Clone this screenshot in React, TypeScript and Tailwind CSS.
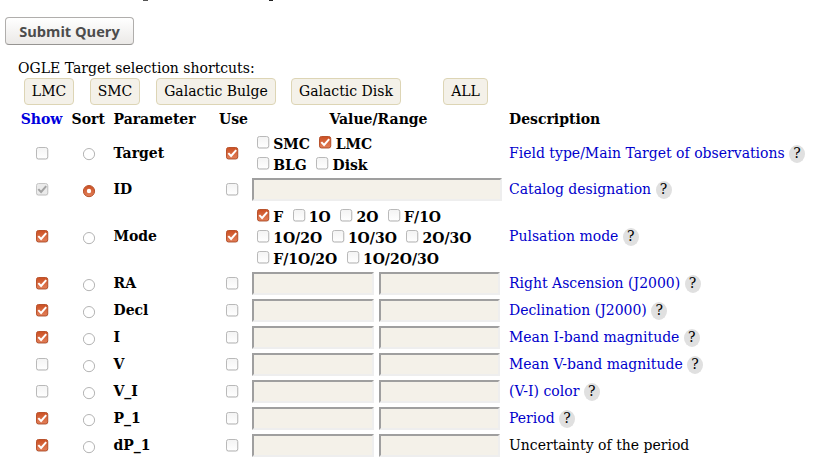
import { Fragment, ReactNode } from "react";

function Check({ on = false, disabled = false }: { on?: boolean; disabled?: boolean }) {
  const stroke = disabled ? "#c6c6c6" : on ? "#b9532d" : "#b9b9b9";
  const fill = disabled ? "#ebebeb" : on ? "url(#orange)" : "url(#plain)";
  return (
    <svg width="13" height="13" viewBox="0 0 13 13" className="shrink-0">
      <rect x="0" y="1" width="12.4" height="11.7" rx="2.5" fill="#000" opacity="0.1" />
      <rect x="0.5" y="0.5" width="11.2" height="11.4" rx="2" fill={fill} stroke={stroke} />
      {on && (
        <path
          d="M2.3 6.1 L5.1 9 L10.2 3.2"
          fill="none"
          stroke={disabled ? "#a3a3a3" : "#fff"}
          strokeWidth="2"
        />
      )}
    </svg>
  );
}

function Radio({ on = false }: { on?: boolean }) {
  return (
    <svg width="13" height="13" viewBox="0 0 13 13" className="shrink-0">
      <circle cx="6" cy="6.1" r="5.6" fill={on ? "url(#orange)" : "#fff"} stroke={on ? "#b9532d" : "#b4b4b4"} />
      {on && <circle cx="6" cy="6" r="2.2" fill="#fff" />}
    </svg>
  );
}

function Option({ label, on }: { label: string; on?: boolean }) {
  return (
    <span className="flex h-[21px] items-start">
      <Check on={on} />
      <b className="ml-[3.2px] leading-[17px]">{label}</b>
    </span>
  );
}

function Options({ lines, on }: { lines: string[][]; on: string }) {
  return (
    <div className="pl-[5px]">
      {lines.map((line) => (
        <div key={line[0]} className="flex gap-[9.5px]">
          {line.map((label) => (
            <Option key={label} label={label} on={label === on} />
          ))}
        </div>
      ))}
    </div>
  );
}

const box =
  "h-[23px] border-2 border-t-[#9f9f9f] border-l-[#9f9f9f] border-b-[#eeeeee] border-r-[#eeeeee] bg-[#f4f1e9] outline-none";

function Range() {
  return (
    <div className="flex gap-[5px]">
      <input className={`w-[122px] ${box}`} />
      <input className={`w-[121px] ${box}`} />
    </div>
  );
}

type Row = {
  name: string;
  height: string;
  show?: boolean;
  locked?: boolean;
  sort?: boolean;
  use?: boolean;
  value: ReactNode;
  desc: string;
  help?: boolean;
};

const range = (name: string, desc: string, show = true, help = true): Row => ({
  name,
  desc,
  show,
  help,
  height: "h-[27px]",
  value: <Range />,
});

const rows: Row[] = [
  {
    name: "Target",
    height: "h-[45px]",
    use: true,
    value: (
      <div className="h-[45px] pt-[5px]">
        <Options on="LMC" lines={[["SMC", "LMC"], ["BLG", "Disk"]]} />
      </div>
    ),
    desc: "Field type/Main Target of observations",
    help: true,
  },
  {
    name: "ID",
    height: "h-[27px]",
    show: true,
    locked: true,
    sort: true,
    value: <input className={`block w-[250px] ${box}`} />,
    desc: "Catalog designation",
    help: true,
  },
  {
    name: "Mode",
    height: "h-[67px]",
    show: true,
    use: true,
    value: (
      <div className="h-[67px] pt-[6px]">
        <Options
          on="F"
          lines={[
            ["F", "1O", "2O", "F/1O"],
            ["1O/2O", "1O/3O", "2O/3O"],
            ["F/1O/2O", "1O/2O/3O"],
          ]}
        />
      </div>
    ),
    desc: "Pulsation mode",
    help: true,
  },
  range("RA", "Right Ascension (J2000)"),
  range("Decl", "Declination (J2000)"),
  range("I", "Mean I-band magnitude"),
  range("V", "Mean V-band magnitude", false),
  range("V_I", "(V-I) color", false),
  range("P_1", "Period"),
  range("dP_1", "Uncertainty of the period", true, false),
];

const shortcuts: [string, string][] = [
  ["LMC", "w-[50px] mr-4"],
  ["SMC", "w-[50px] mr-4"],
  ["Galactic Bulge", "w-[120px] mr-[15px]"],
  ["Galactic Disk", "w-[110px] mr-[42px]"],
  ["ALL", "w-[45px]"],
];

export default function App() {
  return (
    <div className="h-[457px] w-[835px] overflow-hidden bg-white font-['DejaVu_Serif',serif] text-[14px] leading-[17px] whitespace-nowrap text-black">
      <svg width="0" height="0" className="absolute">
        <defs>
          <linearGradient id="orange" x1="0" y1="0" x2="0" y2="1">
            <stop offset="0" stopColor="#cb4f22" />
            <stop offset="1" stopColor="#e2805a" />
          </linearGradient>
          <linearGradient id="plain" x1="0" y1="0" x2="0" y2="1">
            <stop offset="0" stopColor="#f3f3f3" />
            <stop offset="1" stopColor="#ffffff" />
          </linearGradient>
        </defs>
      </svg>
      <div className="flex h-[17px] pl-[143px]">
        <div className="h-px w-[5px] bg-[#555]" />
        <div className="ml-[121px] h-px w-[4px] bg-[#222]" />
      </div>
      <button className="ml-[5px] flex h-[28px] w-[129px] items-center justify-center rounded-[4px] border border-[#b0aeac] border-b-[#969492] bg-linear-to-b from-white to-[#ebe9e7] pt-px font-['Open_Sans',sans-serif] text-[14.6px] font-bold text-[#4c4c4c]">
        Submit Query
      </button>
      <div className="mt-[15px] pl-[18px]">OGLE Target selection shortcuts:</div>
      <div className="mt-px flex pl-6">
        {shortcuts.map(([label, size]) => (
          <button
            key={label}
            className={`flex h-[27px] items-center justify-center rounded-[4px] border border-[#ddd5b5] bg-[#f4f1e9] ${size}`}
          >
            {label}
          </button>
        ))}
      </div>
      <div className="mt-[2px] grid grid-cols-[44px_49.5px_102.5px_36px_257px_1fr] items-center pl-5">
        <b className="flex h-6 items-center justify-center pr-px text-[#0000dd]">Show</b>
        <b className="pr-px text-center">Sort</b>
        <b>Parameter</b>
        <b className="pr-px text-center">Use</b>
        <b className="pr-1 text-center">Value/Range</b>
        <b>Description</b>
        {rows.map((r) => (
          <Fragment key={r.name}>
            <div className={`flex items-center pl-4 ${r.height}`}>
              <Check on={r.show} disabled={r.locked} />
            </div>
            <div className={`flex pl-[19px] ${r.name === "Target" ? "pt-px" : "pt-[3px]"}`}>
              <Radio on={r.sort} />
            </div>
            <b>{r.name}</b>
            <div className="flex pl-[10px]">
              <Check on={r.use} />
            </div>
            <div>{r.value}</div>
            <div className="flex items-center">
              <span className={r.help ? "text-[#0000cc]" : ""}>{r.desc}</span>
              {r.help && (
                <span className="ml-[4.4px] flex h-[18px] w-4 items-center justify-center rounded-[50%] bg-[#e0e0e0]">
                  ?
                </span>
              )}
            </div>
          </Fragment>
        ))}
      </div>
    </div>
  );
}
